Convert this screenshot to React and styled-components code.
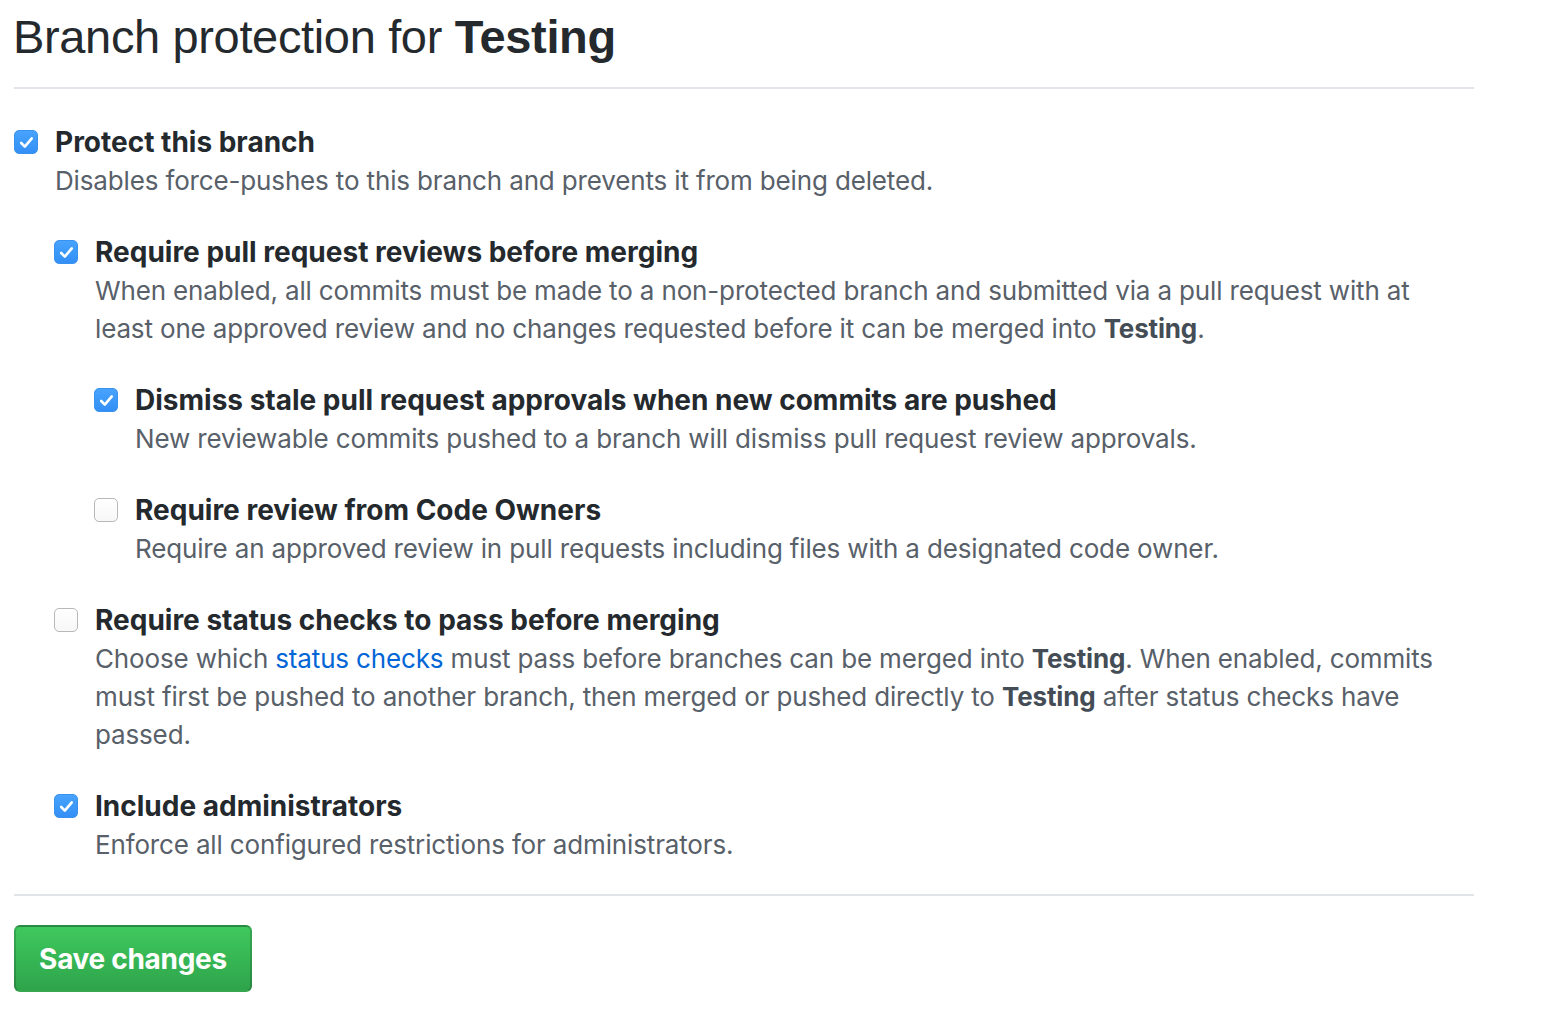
import React from "react";
import styled, { createGlobalStyle } from "styled-components";

const Global = createGlobalStyle`
  html, body { margin: 0; padding: 0; background: #fff; }
  body { font-family: Inter, "Liberation Sans", sans-serif; color: #24292e; }
`;

const Page = styled.div`
  width: 1460px;
  padding: 0 0 0 14px;
`;

const Subhead = styled.div`
  border-bottom: 2px solid #e1e4e8;
  padding: 7px 0 20px;
  margin-bottom: 33px;
`;

const Heading = styled.h2`
  margin: 0 0 0 -1px;
  font-family: "Liberation Sans", Arial, sans-serif;
  font-size: 47px;
  font-weight: 400;
  letter-spacing: -0.35px;
  line-height: 60px;
  color: #24292e;
  b { font-weight: 700; }
`;

const Option = styled.div`
  display: grid;
  grid-template-columns: 24px 1fr;
  column-gap: 17px;
`;

const Box = styled.span`
  width: 24px;
  height: 24px;
  margin-top: 8px;
  box-sizing: border-box;
  border-radius: 5px;
  display: flex;
  align-items: center;
  justify-content: center;
  background: ${(p) => (p.$checked ? "linear-gradient(#47a3fd, #338ff5)" : "linear-gradient(#ffffff, #f7f7f7)")};
  border: 1px solid ${(p) => (p.$checked ? "#3a92f0" : "#b8b8b8")};
`;

const Body = styled.div`
  display: flex;
  flex-direction: column;
`;

const Label = styled.div`
  font-size: 28px;
  font-weight: 700;
  line-height: 40px;
  color: #24292e;
`;

const Note = styled.p`
  margin: 0;
  padding-right: 12px;
  font-size: 26px;
  letter-spacing: -0.15px;
  line-height: 38px;
  color: #586069;
  b { color: #444d56; font-weight: 700; }
`;

const Link = styled.a`
  color: #0366d6;
  text-decoration: none;
`;

const Nested = styled.div`
  display: flex;
  flex-direction: column;
  gap: 32px;
  margin: 32px 0 0 -1px;
`;

const Divider = styled.hr`
  border: 0;
  border-top: 2px solid #e1e4e8;
  margin: 30px 0 29px;
`;

const Button = styled.button`
  font-family: Inter, "Liberation Sans", sans-serif;
  font-size: 28px;
  font-weight: 700;
  letter-spacing: -0.3px;
  color: #fff;
  height: 67px;
  width: 238px;
  border-radius: 6px;
  border: 2px solid rgba(27, 31, 35, 0.2);
  background: linear-gradient(#3fc95d, #2ea44b);
  cursor: pointer;
`;

function Check({ checked }) {
  return (
    <Box $checked={checked}>
      {checked && (
        <svg width="15" height="13" viewBox="0 0 15 13">
          <path d="M2.2 7 L5.8 10.6 L12.8 2.4" fill="none" stroke="#fff" strokeWidth="2.6" strokeLinecap="round" strokeLinejoin="round" />
        </svg>
      )}
    </Box>
  );
}

function Setting({ checked, label, children, nested }) {
  return (
    <Option>
      <Check checked={checked} />
      <Body>
        <Label>{label}</Label>
        <Note>{children}</Note>
        {nested && <Nested>{nested}</Nested>}
      </Body>
    </Option>
  );
}

export default function App() {
  return (
    <>
      <Global />
      <Page>
        <Subhead>
          <Heading>
            Branch protection for <b>Testing</b>
          </Heading>
        </Subhead>
        <Setting
          checked
          label="Protect this branch"
          nested={
            <>
              <Setting
                checked
                label="Require pull request reviews before merging"
                nested={
                  <>
                    <Setting checked label="Dismiss stale pull request approvals when new commits are pushed">
                      New reviewable commits pushed to a branch will dismiss pull request review approvals.
                    </Setting>
                    <Setting label="Require review from Code Owners">
                      Require an approved review in pull requests including files with a designated code owner.
                    </Setting>
                  </>
                }
              >
                When enabled, all commits must be made to a non-protected branch and submitted via a pull request with at
                least one approved review and no changes requested before it can be merged into <b>Testing</b>.
              </Setting>
              <Setting label="Require status checks to pass before merging">
                Choose which <Link href="#">status checks</Link> must pass before branches can be merged into <b>Testing</b>.
                When enabled, commits must first be pushed to another branch, then merged or pushed directly to{" "}
                <b>Testing</b> after status checks have passed.
              </Setting>
              <Setting checked label="Include administrators">
                Enforce all configured restrictions for administrators.
              </Setting>
            </>
          }
        >
          Disables force-pushes to this branch and prevents it from being deleted.
        </Setting>
        <Divider />
        <Button>Save changes</Button>
      </Page>
    </>
  );
}
